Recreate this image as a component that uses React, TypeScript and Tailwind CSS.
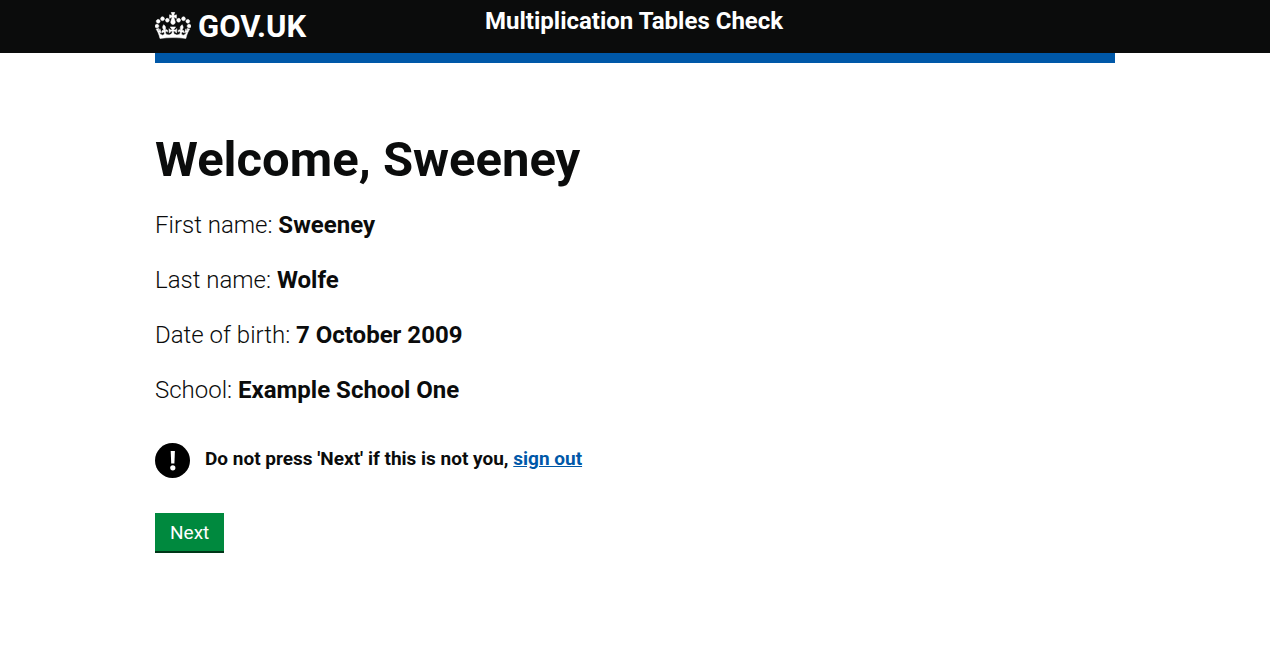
const details = [
  { label: 'First name', value: 'Sweeney' },
  { label: 'Last name', value: 'Wolfe' },
  { label: 'Date of birth', value: '7 October 2009' },
  { label: 'School', value: 'Example School One' },
];

function Crown() {
  return (
    <svg aria-hidden="true" viewBox="0 0 132 97" className="h-[27px] w-9 shrink-0 fill-current">
      <path
        fillRule="evenodd"
        stroke="currentColor"
        strokeWidth="2"
        d="M25 30.2c3.5 1.5 7.7-.2 9.1-3.7 1.5-3.6-.2-7.8-3.9-9.2-3.6-1.4-7.6.3-9.1 3.9-1.4 3.5.3 7.5 3.9 9zM9 39.5c3.6 1.5 7.8-.2 9.2-3.7 1.5-3.6-.2-7.8-3.9-9.1-3.6-1.5-7.6.2-9.1 3.8-1.4 3.5.3 7.5 3.8 9zM4.4 57.2c3.5 1.5 7.7-.2 9.1-3.8 1.5-3.6-.2-7.7-3.9-9.1-3.5-1.5-7.6.3-9.1 3.8-1.4 3.5.3 7.6 3.9 9.1zm38.3-21.4c3.5 1.5 7.7-.2 9.1-3.8 1.5-3.6-.2-7.7-3.9-9.1-3.6-1.5-7.6.3-9.1 3.8-1.3 3.6.4 7.7 3.9 9.1zm64.4-5.6c-3.6 1.5-7.8-.2-9.1-3.7-1.5-3.6.2-7.8 3.8-9.2 3.6-1.4 7.7.3 9.2 3.9 1.3 3.5-.4 7.5-3.9 9zm15.9 9.3c-3.6 1.5-7.7-.2-9.1-3.7-1.5-3.6.2-7.8 3.7-9.1 3.6-1.5 7.7.2 9.2 3.8 1.5 3.5-.3 7.5-3.8 9zm4.7 17.7c-3.6 1.5-7.8-.2-9.2-3.8-1.5-3.6.2-7.7 3.9-9.1 3.6-1.5 7.7.3 9.2 3.8 1.3 3.5-.4 7.6-3.9 9.1zM89.3 35.8c-3.6 1.5-7.8-.2-9.2-3.8-1.4-3.6.2-7.7 3.9-9.1 3.6-1.5 7.7.3 9.2 3.8 1.4 3.6-.3 7.7-3.9 9.1zM69.7 17.7l8.9 4.7V9.3l-8.9 2.8c-.2-.3-.5-.6-.9-.9L72.4 0H59.6l3.5 11.2c-.3.3-.6.5-.9.9l-8.8-2.8v13.1l8.8-4.7c.3.3.6.7.9.9l-5 15.4v.1c-.2.8-.4 1.6-.4 2.4 0 4.1 3.1 7.5 7 8.1h.2c.3 0 .7.1 1 .1.4 0 .7 0 1-.1h.2c4-.6 7.1-4.1 7.1-8.1 0-.8-.1-1.7-.4-2.4V34l-5.1-15.4c.4-.2.7-.6 1-.9zM66 92.8c16.9 0 32.8 1.1 47.1 3.2 4-16.9 8.9-26.7 14-33.5l-9.6-3.4c1 4.9 1.1 7.2 0 10.2-1.5-1.4-3-4.3-4.2-8.7L108.6 76c2.8-2 5-3.2 7.5-3.3-4.4 9.4-10 11.9-13.6 11.2-4.3-.8-6.3-4.6-5.6-7.9 1-4.7 5.7-5.9 8-.5 4.3-8.7-3-11.4-7.6-8.8 7.1-7.2 7.9-13.5 2.1-21.1-8 6.1-8.1 12.3-4.5 20.8-4.7-5.4-12.1-2.5-9.5 6.2 3.4-5.2 7.9-2 7.2 3.1-.6 4.3-6.4 7.8-13.5 7.2-10.3-.9-10.9-8-11.2-13.8 2.5-.5 7.1 1.8 11 7.3L80.2 60c-4.1 4.4-8 5.3-12.3 5.4 1.4-4.4 8-11.6 8-11.6H55.5s6.4 7.2 7.9 11.6c-4.2-.1-8-1-12.3-5.4l1.4 16.4c3.9-5.5 8.5-7.7 10.9-7.3-.3 5.8-.9 12.8-11.1 13.8-7.2.6-12.9-2.9-13.5-7.2-.7-5 3.8-8.3 7.1-3.1 2.7-8.7-4.6-11.6-9.4-6.2 3.7-8.5 3.6-14.7-4.6-20.8-5.8 7.6-5 13.9 2.2 21.1-4.7-2.6-11.9.1-7.7 8.8 2.3-5.5 7.1-4.2 8.1.5.7 3.3-1.3 7.1-5.7 7.9-3.5.7-9-1.8-13.5-11.2 2.5.1 4.7 1.3 7.5 3.3l-4.7-15.4c-1.2 4.4-2.7 7.2-4.3 8.7-1.1-3-.9-5.3 0-10.2l-9.5 3.4c5 6.9 9.9 16.7 14 33.5 14.8-2.1 30.8-3.2 47.7-3.2z"
      />
    </svg>
  );
}

function WarningIcon() {
  return (
    <svg aria-hidden="true" viewBox="0 0 35 35" className="size-[35px] shrink-0">
      <circle cx="17.5" cy="17.5" r="17.5" fill="#000" />
      <path d="M15.7 8h4.2l-.5 12.4h-3.2z" fill="#fff" />
      <circle cx="17.8" cy="24.8" r="2.6" fill="#fff" />
    </svg>
  );
}

export default function App() {
  return (
    <div className="font-['Roboto','Liberation_Sans',sans-serif] text-[#0b0c0c]">
      <header className="bg-[#0b0c0c] text-white">
        <div className="mx-auto grid h-[53px] max-w-[960px] grid-cols-[330px_1fr]">
          <a href="#home" className="flex items-start gap-[7px] pt-3 text-[31px] leading-[30px] font-bold">
            <Crown />
            <span>GOV.UK</span>
          </a>
          <a href="#check" className="justify-self-start pt-[6px] text-2xl leading-[30px] font-bold">
            Multiplication Tables Check
          </a>
        </div>
      </header>
      <div className="mx-auto h-[10px] max-w-[960px] bg-[#0058a8]" />
      <main className="mx-auto max-w-[960px] pt-[72px]">
        <h1 className="text-[49px] leading-[50px] font-bold">Welcome, Sweeney</h1>
        <div className="mt-[25px] flex flex-col gap-[25px]">
          {details.map(({ label, value }) => (
            <p key={label} className="text-2xl leading-[30px] font-[350]">
              {label}: <strong className="font-bold">{value}</strong>
            </p>
          ))}
        </div>
        <div className="mt-[38px] flex items-center gap-[15px]">
          <WarningIcon />
          <strong className="pb-1 text-[19px] leading-[25px] font-bold">
            Do not press 'Next' if this is not you,{' '}
            <a href="#sign-out" className="text-[#0058a8] underline">
              sign out
            </a>
          </strong>
        </div>
        <button
          type="button"
          className="mt-[35px] h-10 border-b-2 border-[#003618] bg-[#00893e] px-[15px] text-[19px] leading-[19px] text-white"
        >
          Next
        </button>
      </main>
    </div>
  );
}
